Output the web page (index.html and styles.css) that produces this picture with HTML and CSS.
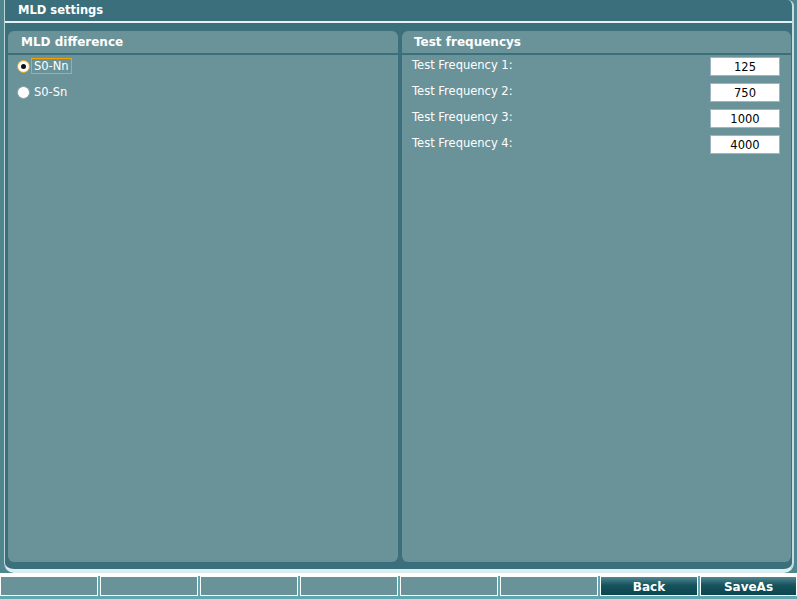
FILE: index.html
```html
<!DOCTYPE html>
<html>
<head>
<meta charset="utf-8">
<link rel="stylesheet" href="styles.css">
</head>
<body>
<div class="frame">
  <div class="title">MLD settings</div>
  <div class="content">
    <section class="panel panel-left">
      <div class="panel-head">MLD difference</div>
      <div class="panel-body radios">
        <div class="radio-row">
          <span class="radio checked"></span>
          <span class="rlabel focus">S0-Nn</span>
        </div>
        <div class="radio-row">
          <span class="radio"></span>
          <span class="rlabel">S0-Sn</span>
        </div>
      </div>
    </section>
    <section class="panel panel-right">
      <div class="panel-head">Test frequencys</div>
      <div class="panel-body freqs">
        <div class="freq-row"><span class="flabel">Test Frequency 1:</span><input class="field" value="125" readonly></div>
        <div class="freq-row"><span class="flabel">Test Frequency 2:</span><input class="field" value="750" readonly></div>
        <div class="freq-row"><span class="flabel">Test Frequency 3:</span><input class="field" value="1000" readonly></div>
        <div class="freq-row"><span class="flabel">Test Frequency 4:</span><input class="field" value="4000" readonly></div>
      </div>
    </section>
  </div>
</div>
<div class="bottombar">
  <div class="btn"></div>
  <div class="btn"></div>
  <div class="btn"></div>
  <div class="btn"></div>
  <div class="btn"></div>
  <div class="btn"></div>
  <div class="btn active">Back</div>
  <div class="btn active">SaveAs</div>
</div>
</body>
</html>
```

FILE: styles.css
```css
* { box-sizing: border-box; }
html, body {
  margin: 0;
  padding: 0;
}
body {
  width: 797px;
  height: 599px;
  overflow: hidden;
  background: #4f8690;
  font-family: "DejaVu Sans", Verdana, sans-serif;
  font-size: 11.5px;
  color: #ffffff;
}
.frame {
  margin-left: 4px;
  margin-right: 3px;
  height: 573px;
  background: #3b6f7b;
  border-left: 1px solid #bcd6d8;
  border-right: 2px solid #c4dde0;
  border-bottom: 4px solid #dbeeee;
  border-radius: 0 6px 10px 10px;
  display: flex;
  flex-direction: column;
}
.title {
  height: 23px;
  padding-left: 13px;
  line-height: 21px;
  font-weight: bold;
  font-size: 11.5px;
  border-bottom: 2px solid #e4f1f2;
}
.content {
  flex: 1;
  display: flex;
  gap: 4px;
  padding: 8px 1px 7px 3px;
}
.panel {
  background: #6a9399;
  border-radius: 6px;
  display: flex;
  flex-direction: column;
}
.panel-left { width: 390px; }
.panel-right { width: 389px; }
.panel-head {
  height: 24px;
  line-height: 22px;
  padding-left: 13px;
  font-weight: bold;
  font-size: 12px;
  border-bottom: 2px solid #3b6f7b;
}
.panel-right .panel-head { padding-left: 12px; }
.panel-body { flex: 1; }
.radios {
  padding: 3px 0 0 9px;
  display: flex;
  flex-direction: column;
  gap: 10px;
}
.radio-row {
  display: flex;
  align-items: center;
  height: 16px;
}
.radio {
  width: 13px;
  height: 13px;
  border-radius: 50%;
  background: #ffffff;
  border: 1px solid #8a9ea4;
  position: relative;
  flex: none;
}
.radio.checked {
  border: 1px solid #e8a020;
  box-shadow: inset 0 0 0 1px #fff6e0;
}
.radio.checked::after {
  content: "";
  position: absolute;
  left: 3px;
  top: 3px;
  width: 5px;
  height: 5px;
  border-radius: 50%;
  background: #101010;
}
.rlabel {
  margin-left: 1px;
  padding: 0 2px 0 2px;
  height: 16px;
  line-height: 14px;
  border: 1px solid transparent;
}
.rlabel.focus { border-color: #f5a000; }
.freqs {
  padding: 2px 11px 0 10px;
  display: flex;
  flex-direction: column;
  gap: 7px;
}
.freq-row {
  display: flex;
  justify-content: space-between;
  align-items: flex-start;
  height: 19px;
}
.flabel { line-height: 17px; }
.field {
  width: 70px;
  height: 19px;
  margin: 0;
  padding: 0;
  border: 1px solid #9fb3c6;
  background: #ffffff;
  color: #000000;
  text-align: center;
  font-family: "DejaVu Sans", Verdana, sans-serif;
  font-size: 11.5px;
  outline: none;
}
.bottombar {
  height: 26px;
  background: #5ea7ae;
  border-top: 3px solid #ffffff;
  padding-bottom: 3px;
  display: flex;
  gap: 2px;
}
.btn {
  width: 98px;
  flex: none;
  height: 20px;
  background: #6a9399;
  border: 1px solid #ffffff;
  color: #ffffff;
  font-weight: bold;
  font-size: 12px;
  text-align: center;
  line-height: 20px;
}
.btn:last-child { width: 97px; }
.btn.active {
  background: linear-gradient(#4f8a93 0%, #17535d 45%, #0c4650 100%);
}
```
